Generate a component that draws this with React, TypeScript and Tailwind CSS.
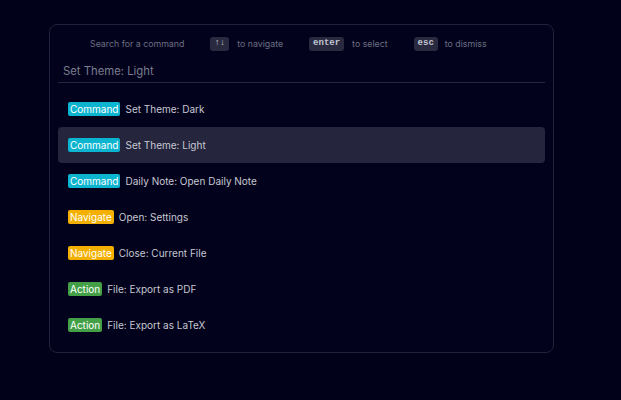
import React from 'react';

type Kind = 'Command' | 'Navigate' | 'Action';

const badgeClass: Record<Kind, string> = {
  Command: 'bg-[#0bb4cf]',
  Navigate: 'bg-[#f4b000]',
  Action: 'bg-[#43a047]',
};

const items: { kind: Kind; label: string }[] = [
  { kind: 'Command', label: 'Set Theme: Dark' },
  { kind: 'Command', label: 'Set Theme: Light' },
  { kind: 'Command', label: 'Daily Note: Open Daily Note' },
  { kind: 'Navigate', label: 'Open: Settings' },
  { kind: 'Navigate', label: 'Close: Current File' },
  { kind: 'Action', label: 'File: Export as PDF' },
  { kind: 'Action', label: 'File: Export as LaTeX' },
];

const Kbd: React.FC<{ children: React.ReactNode }> = ({ children }) => (
  <span className="rounded-[3px] bg-[#292a40] px-[4px] h-[14px] flex items-center text-[9px] font-bold text-[#c2c4d0] font-['Liberation_Mono',monospace]">
    {children}
  </span>
);

const App: React.FC = () => {
  return (
    <div className="min-h-screen bg-[#01011a] pt-[24px] pl-[49px] font-['Inter',sans-serif]">
      <div className="w-[505px] h-[329px] rounded-[8px] border border-[#222339] bg-[#02021c] px-[8px] pt-[11px]">
        <div className="flex items-center h-[16px] pl-[32px] text-[8.8px] text-[#6c6f82]">
          <span>Search for a command</span>
          <span className="ml-[26px]"><Kbd>↑↓</Kbd></span>
          <span className="ml-[8px]">to navigate</span>
          <span className="ml-[26px]"><Kbd>enter</Kbd></span>
          <span className="ml-[8px]">to select</span>
          <span className="ml-[26px]"><Kbd>esc</Kbd></span>
          <span className="ml-[7px]">to dismiss</span>
        </div>
        <div className="mt-[8px] border-b border-[#26273d] h-[23px] flex items-center pl-[5px] text-[11.3px] text-[#7b7e8f]">
          Set Theme: Light
        </div>
        <div className="mt-[8px] flex flex-col">
          {items.map((it, i) => (
            <div
              key={i}
              className={
                'h-[36px] flex items-center gap-[5px] pl-[10px] rounded-[4px] ' +
                (i === 1 ? 'bg-[#25263e]' : '')
              }
            >
              <span className={'px-[2px] h-[14px] flex items-center rounded-[2px] text-[10px] text-white ' + badgeClass[it.kind]}>
                {it.kind}
              </span>
              <span className="text-[10px] text-[#c7c8d2]">{it.label}</span>
            </div>
          ))}
        </div>
      </div>
    </div>
  );
};

export default App;
